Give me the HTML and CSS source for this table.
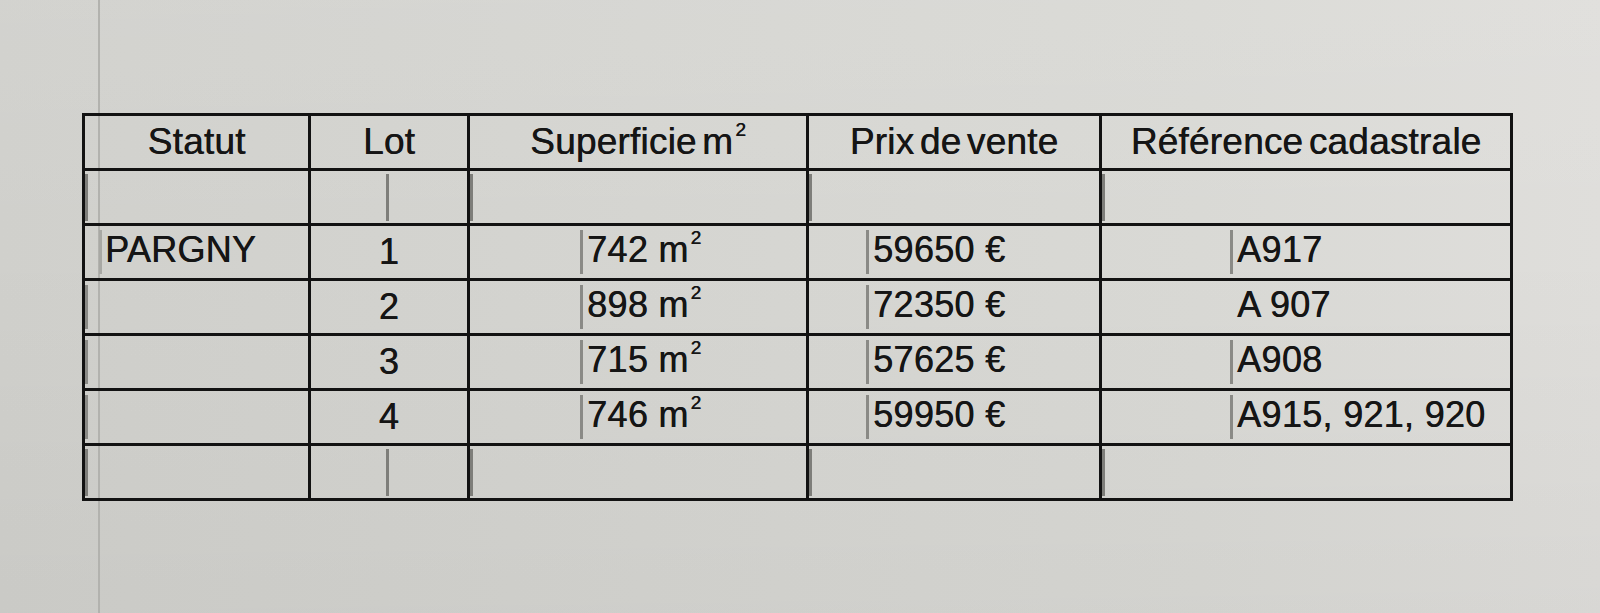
FILE: index.html
```html
<!DOCTYPE html>
<html lang="fr">
<head>
<meta charset="utf-8">
<title>Lots PARGNY</title>
<link rel="stylesheet" href="styles.css">
</head>
<body>
<div class="page">
  <table class="lots">
    <colgroup>
      <col class="c1"><col class="c2"><col class="c3"><col class="c4"><col class="c5">
    </colgroup>
    <thead>
      <tr>
        <th>Statut</th>
        <th>Lot</th>
        <th>Superficie m<sup>2</sup></th>
        <th>Prix de vente</th>
        <th>Référence cadastrale</th>
      </tr>
    </thead>
    <tbody>
      <tr class="empty">
        <td class="left"><span class="mark"></span></td>
        <td class="center"><span class="mark"></span></td>
        <td class="left"><span class="mark"></span></td>
        <td class="left"><span class="mark"></span></td>
        <td class="left"><span class="mark"></span></td>
      </tr>
      <tr>
        <td class="statut"><span class="mark faint"></span>PARGNY</td>
        <td class="center">1</td>
        <td class="area"><span class="mark"></span>742 m<sup>2</sup></td>
        <td class="price"><span class="mark"></span>59650 €</td>
        <td class="ref"><span class="mark"></span>A917</td>
      </tr>
      <tr>
        <td class="left"><span class="mark"></span></td>
        <td class="center">2</td>
        <td class="area"><span class="mark"></span>898 m<sup>2</sup></td>
        <td class="price"><span class="mark"></span>72350 €</td>
        <td class="ref"><span class="mark none"></span>A 907</td>
      </tr>
      <tr>
        <td class="left"><span class="mark"></span></td>
        <td class="center">3</td>
        <td class="area"><span class="mark"></span>715 m<sup>2</sup></td>
        <td class="price"><span class="mark"></span>57625 €</td>
        <td class="ref"><span class="mark"></span>A908</td>
      </tr>
      <tr>
        <td class="left"><span class="mark"></span></td>
        <td class="center">4</td>
        <td class="area"><span class="mark"></span>746 m<sup>2</sup></td>
        <td class="price"><span class="mark"></span>59950 €</td>
        <td class="ref"><span class="mark"></span>A915, 921, 920</td>
      </tr>
      <tr class="empty">
        <td class="left"><span class="mark"></span></td>
        <td class="center"><span class="mark"></span></td>
        <td class="left"><span class="mark"></span></td>
        <td class="left"><span class="mark"></span></td>
        <td class="left"><span class="mark"></span></td>
      </tr>
    </tbody>
  </table>
</div>
</body>
</html>
```
FILE: styles.css
```css
html, body {
  margin: 0;
  padding: 0;
}
body {
  width: 1600px;
  height: 613px;
  overflow: hidden;
  font-family: "Liberation Sans", Arial, sans-serif;
  color: #151515;
  background:
    linear-gradient(90deg, transparent 98px, #b2b2ae 98px, #b2b2ae 100px, transparent 100px),
    linear-gradient(180deg, rgba(255,255,255,0.06) 0%, rgba(255,255,255,0) 40%, rgba(0,0,0,0.03) 100%),
    linear-gradient(90deg, #d0d0cc 0%, #d5d5d1 40%, #d9d9d5 75%, #dfdedb 100%);
}
.page {
  padding: 113px 0 0 82px;
}
.lots {
  border-collapse: collapse;
  width: 1428px;
  table-layout: fixed;
  border: 3px solid #121212;
}
.c1 { width: 226px; }
.c2 { width: 159px; }
.c3 { width: 339px; }
.c4 { width: 293px; }
.c5 { width: 411px; }
.lots th, .lots td {
  border: 3px solid #121212;
  height: 52px;
  padding: 0;
  line-height: 40px;
  vertical-align: middle;
  white-space: nowrap;
  text-shadow: 0.5px 0 0 currentColor;
}
.lots th {
  font-size: 37px;
  font-weight: normal;
  text-align: center;
  word-spacing: -5px;
  letter-spacing: 0.2px;
}
.lots td {
  font-size: 36px;
  letter-spacing: 0.3px;
}
sup {
  font-size: 19px;
  vertical-align: top;
  position: relative;
  top: -2px;
  margin-left: 2px;
  line-height: 1;
}
.left { padding-left: 14px; text-align: left; }
.center { text-align: center; }
.lots td.statut { padding-left: 19px; }
.lots td.area { padding-left: 110px; }
.lots td.price { padding-left: 57px; }
.lots td.ref { padding-left: 128px; }
.mark {
  display: inline-block;
  width: 3px;
  height: 44px;
  background: #8a8a86;
  vertical-align: middle;
  margin-right: 4px;
}
.empty .mark { height: 47px; background: #7e7e7a; }
.mark.faint { background: #a8a8a4; margin-left: -5px; margin-right: 3px; }
.mark.none { background: transparent; }
```
